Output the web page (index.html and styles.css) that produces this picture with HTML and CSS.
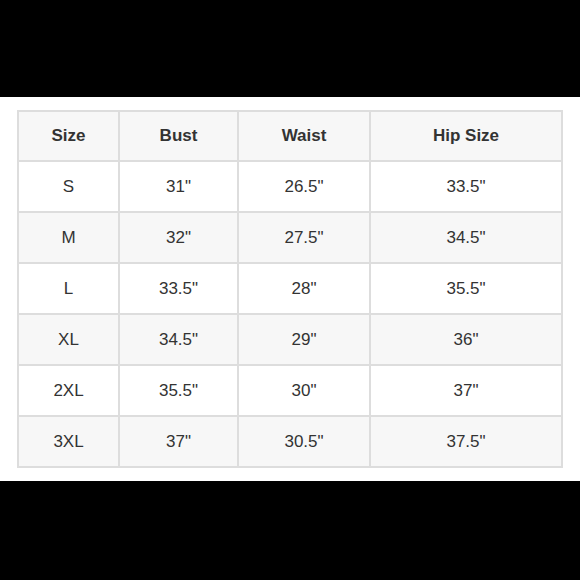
FILE: index.html
```html
<!DOCTYPE html>
<html>
<head>
<meta charset="utf-8">
<link rel="stylesheet" href="styles.css">
</head>
<body>
<div class="band">
  <table class="chart">
    <colgroup>
      <col class="c1"><col class="c2"><col class="c3"><col class="c4">
    </colgroup>
    <thead>
      <tr class="alt"><th>Size</th><th>Bust</th><th>Waist</th><th>Hip Size</th></tr>
    </thead>
    <tbody>
      <tr><td>S</td><td>31"</td><td>26.5"</td><td>33.5"</td></tr>
      <tr class="alt"><td>M</td><td>32"</td><td>27.5"</td><td>34.5"</td></tr>
      <tr><td>L</td><td>33.5"</td><td>28"</td><td>35.5"</td></tr>
      <tr class="alt"><td>XL</td><td>34.5"</td><td>29"</td><td>36"</td></tr>
      <tr><td>2XL</td><td>35.5"</td><td>30"</td><td>37"</td></tr>
      <tr class="alt"><td>3XL</td><td>37"</td><td>30.5"</td><td>37.5"</td></tr>
    </tbody>
  </table>
</div>
</body>
</html>
```
FILE: styles.css
```css
html, body {
  margin: 0;
  padding: 0;
  background: #000;
  height: 580px;
}
.band {
  margin-top: 97px;
  height: 384px;
  background: #fff;
  padding: 13px 0 0 17px;
  box-sizing: border-box;
}
.chart {
  table-layout: fixed;
  width: 546px;
  border-collapse: separate;
  border-spacing: 2px;
  background: #dddddd;
  font-family: "Liberation Sans", Arial, sans-serif;
  color: #333;
}
.c1 { width: 99px; }
.c2 { width: 117px; }
.c3 { width: 130px; }
.c4 { width: 190px; }
.chart th, .chart td {
  height: 49px;
  padding: 0;
  text-align: center;
  vertical-align: middle;
  background: #fff;
}
.chart th {
  font-size: 17px;
  font-weight: bold;
  height: 48px;
}
.chart td {
  font-size: 17px;
}
.chart tr.alt th, .chart tr.alt td {
  background: #f7f7f7;
}
```
